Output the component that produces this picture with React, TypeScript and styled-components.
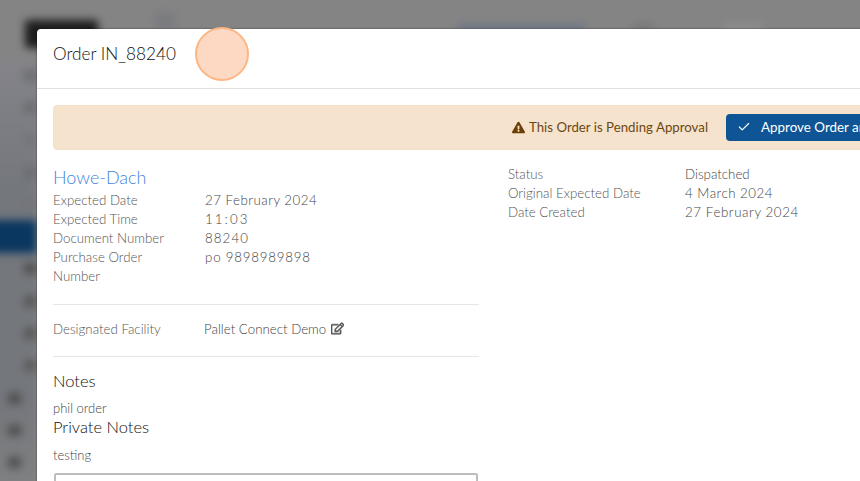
import React from 'react';
import styled, { createGlobalStyle } from 'styled-components';
import { Check } from 'lucide-react';
import { FaExclamationTriangle, FaRegEdit } from 'react-icons/fa';

const GlobalStyle = createGlobalStyle`
  html, body {
    margin: 0;
    padding: 0;
    width: 860px;
    height: 481px;
    overflow: hidden;
    background: #808080;
  }
  * { box-sizing: border-box; }
`;

const Screen = styled.div`
  position: relative;
  width: 860px;
  height: 481px;
  overflow: hidden;
  font-family: Lato, "Open Sans", sans-serif;
  font-weight: 300;
`;

/* the app behind the dialog, blurred and dimmed; oversized so the blur has no soft outer edge */
const Backdrop = styled.div`
  width: 900px;
  height: 521px;
  margin: -20px;
  background: #848484;
  filter: blur(4px);
  display: grid;
  grid-template-columns: 57px 1fr;
  grid-template-rows: 79px 1fr;
`;

const TopBar = styled.div`
  grid-column: 1 / 3;
  display: flex;
  align-items: flex-start;
  padding: 40px 0 0 45px;
`;

const LogoMark = styled.div`
  width: 73px;
  height: 28px;
  background: #1c1c1c;
  border-radius: 2px;
  flex: none;
`;

const SearchBlob = styled.div`
  width: 20px;
  height: 18px;
  margin: -8px 0 0 57px;
  background: #7a7b7f;
  flex: none;
`;

const TopLink = styled.div<{ $width: number; $gap: number; $tone: string }>`
  width: ${(p) => p.$width}px;
  height: 9px;
  margin: 4px 0 0 ${(p) => p.$gap}px;
  background: ${(p) => p.$tone};
  flex: none;
`;

const Sidebar = styled.div`
  display: flex;
  flex-direction: column;
  background: linear-gradient(#84848a, #74777c 30%, #74777c 78%, #828282);
`;

const SideItem = styled.div<{ $active?: boolean; $outer?: boolean; $tone?: string }>`
  height: 32.3px;
  flex: none;
  display: flex;
  align-items: center;
  background: ${(p) => (p.$active ? '#0a3760' : 'transparent')};
  padding-left: ${(p) => (p.$outer ? 28 : 44)}px;

  &::before {
    content: '';
    width: 13px;
    height: 11px;
    background: ${(p) => (p.$active ? '#0a3760' : p.$tone ?? '#4e4e4e')};
  }
`;

const Modal = styled.section`
  position: absolute;
  left: 37px;
  top: 29px;
  width: 860px;
  height: 500px;
  background: #fff;
  border-radius: 4px 0 0 0;
  box-shadow: 0 0 2px rgba(0, 0, 0, 0.6);
  color: #333;
`;

const ModalHeader = styled.header`
  height: 60px;
  padding: 0 16px 11px;
  display: flex;
  align-items: center;
  border-bottom: 1px solid #e0e0e0;
`;

const ModalTitle = styled.h4`
  margin: 0;
  font-size: 17.2px;
  font-weight: 300;
  color: #111;
`;

const ModalBody = styled.div`
  padding: 16px;
`;

const Banner = styled.div`
  height: 45px;
  background: #f5e3cd;
  border: 1px solid #f3e0c8;
  border-radius: 4px;
  display: flex;
  align-items: center;
  padding: 0 0 1px 458px;
  color: #6d4812;
  font-size: 13.25px;
  font-weight: 400;
  white-space: nowrap;
`;

const BannerIcon = styled.span`
  display: inline-flex;
  margin-right: 4px;
  font-size: 13px;
  color: #6b3f06;
`;

const ApproveButton = styled.button`
  margin-left: 18px;
  height: 27px;
  padding: 0 11px;
  border: none;
  border-radius: 4px;
  background: #0f5595;
  color: #fff;
  font-family: inherit;
  font-size: 13.4px;
  font-weight: 400;
  display: inline-flex;
  align-items: center;
  gap: 10px;
  white-space: nowrap;
  flex: none;
`;

const Columns = styled.div`
  display: grid;
  grid-template-columns: 426px 1fr;
  column-gap: 29px;
  margin-top: 15px;
`;

const Company = styled.a`
  display: block;
  font-size: 18px;
  line-height: 25.6px;
  font-weight: 300;
  color: #3f86dc;
`;

const Field = styled.div<{ $labelWidth: number }>`
  display: grid;
  grid-template-columns: ${(p) => p.$labelWidth}px 1fr;
  font-size: 13.3px;
  line-height: 19.2px;
`;

const Label = styled.span`
  color: #555;
  max-width: 128px;
`;

const WideLabel = styled(Label)`
  max-width: none;
`;

const Value = styled.span<{ $spacing: number }>`
  color: #444;
  letter-spacing: ${(p) => p.$spacing}px;
`;

const Rule = styled.hr`
  border: none;
  border-top: 1px solid #e6e6e6;
  margin: 17px 0 15px;
`;

const FacilityRule = styled(Rule)`
  margin: 17px 0 13px;
`;

const EditIcon = styled.span`
  display: inline-flex;
  vertical-align: -1px;
  margin-left: 5px;
  font-size: 13px;
  color: #555;

  svg {
    stroke: currentColor;
    stroke-width: 24;
  }
`;

const FacilityValue = styled.span`
  color: #444;
`;

const NotesTitle = styled.h5`
  margin: 0;
  font-size: 16.5px;
  line-height: 22px;
  font-weight: 300;
  color: #111;
`;

const NoteText = styled.p<{ $gap: number }>`
  margin: ${(p) => p.$gap}px 0 0;
  font-size: 13px;
  line-height: 18px;
  color: #444;
`;

const PrivateTitle = styled(NotesTitle)`
  margin-top: -1px;
`;

const NoteBox = styled.textarea`
  display: block;
  width: 424px;
  height: 80px;
  margin: 9px 0 0 1px;
  border: 2px solid #bdbdbd;
  border-radius: 2px;
  resize: none;
`;

const Marker = styled.div`
  position: absolute;
  left: 195px;
  top: 27px;
  width: 54px;
  height: 54px;
  border-radius: 50%;
  background: #fdd9c3;
  border: 2px solid #fbb684;
`;

const leftFields: [string, string, number][] = [
  ['Expected Date', '27 February 2024', 0.5],
  ['Expected Time', '11:03', 2.1],
  ['Document Number', '88240', 1.1],
  ['Purchase Order Number', 'po 9898989898', 0.8],
];

const rightFields: [string, string, number][] = [
  ['Status', 'Dispatched', 0],
  ['Original Expected Date', '4 March 2024', 0.5],
  ['Date Created', '27 February 2024', 0.6],
];

const sideTones = ['#6a6c70', '#6a6c70', '#72747a', '#6a6c70', '#72747a'];
const lowerTones = ['#4e4e4e', '#565656', '#565656', '#5a5a5a'];

const App: React.FC = () => {
  return (
    <Screen>
      <GlobalStyle />
      <Backdrop aria-hidden>
        <TopBar>
          <LogoMark />
          <SearchBlob />
          <TopLink $width={128} $gap={282} $tone="#6f7585" />
          <TopLink $width={20} $gap={48} $tone="#767676" />
          <TopLink $width={40} $gap={70} $tone="#8e8e8e" />
        </TopBar>
        <Sidebar>
          {sideTones.map((tone, i) => (
            <SideItem key={i} $tone={tone} />
          ))}
          <SideItem $active />
          {lowerTones.map((tone, i) => (
            <SideItem key={i} $tone={tone} />
          ))}
          <SideItem $outer />
          <SideItem $outer />
          <SideItem $outer />
        </Sidebar>
      </Backdrop>

      <Modal>
        <ModalHeader>
          <ModalTitle>Order IN_88240</ModalTitle>
        </ModalHeader>
        <ModalBody>
          <Banner>
            <BannerIcon>
              <FaExclamationTriangle />
            </BannerIcon>
            This Order is Pending Approval
            <ApproveButton>
              <Check size={14} strokeWidth={2} />
              Approve Order and Send
            </ApproveButton>
          </Banner>

          <Columns>
            <div>
              <Company>Howe-Dach</Company>
              {leftFields.map(([label, value, spacing]) => (
                <Field key={label} $labelWidth={152}>
                  <Label>{label}</Label>
                  <Value $spacing={spacing}>{value}</Value>
                </Field>
              ))}
              <Rule />
              <Field $labelWidth={151}>
                <WideLabel>Designated Facility</WideLabel>
                <FacilityValue>
                  Pallet Connect Demo
                  <EditIcon>
                    <FaRegEdit />
                  </EditIcon>
                </FacilityValue>
              </Field>
              <FacilityRule />
              <NotesTitle>Notes</NotesTitle>
              <NoteText $gap={7}>phil order</NoteText>
              <PrivateTitle>Private Notes</PrivateTitle>
              <NoteText $gap={8}>testing</NoteText>
              <NoteBox readOnly />
            </div>
            <div>
              {rightFields.map(([label, value, spacing]) => (
                <Field key={label} $labelWidth={177}>
                  <WideLabel>{label}</WideLabel>
                  <Value $spacing={spacing}>{value}</Value>
                </Field>
              ))}
            </div>
          </Columns>
        </ModalBody>
      </Modal>

      <Marker />
    </Screen>
  );
};

export default App;
